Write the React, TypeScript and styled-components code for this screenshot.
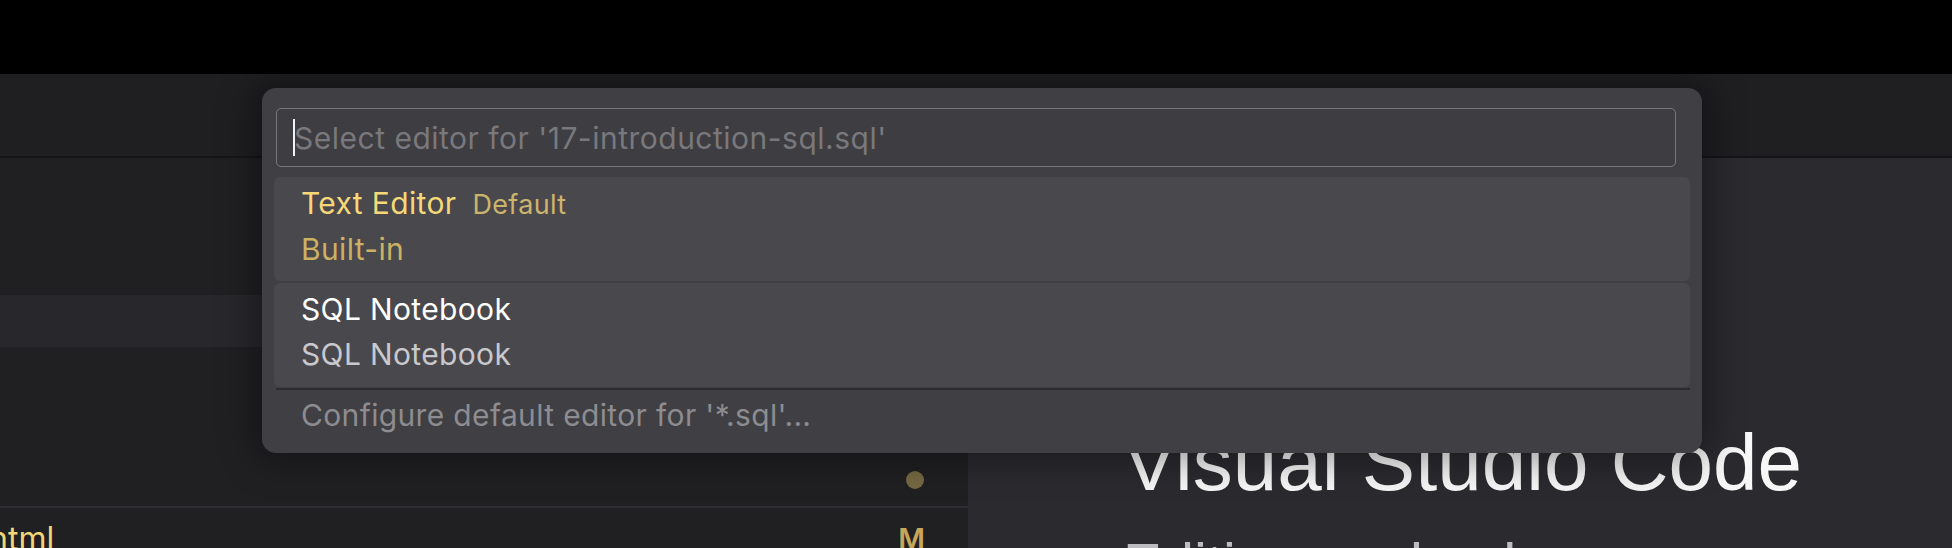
import React from 'react'
import styled, { createGlobalStyle } from 'styled-components'

const GlobalStyle = createGlobalStyle`
  html, body {
    margin: 0;
    padding: 0;
    background: #000;
  }
  body {
    width: 1952px;
    height: 548px;
    overflow: hidden;
    font-family: Inter, "Noto Sans", sans-serif;
    -webkit-font-smoothing: antialiased;
  }
`

const Window = styled.div`
  position: relative;
  width: 1952px;
  height: 548px;
  overflow: hidden;
  display: flex;
  flex-direction: column;
  background: #000;
`

const TitleBar = styled.div`
  flex: none;
  height: 74px;
  background: #000;
`

const TabStrip = styled.div`
  flex: none;
  height: 82px;
  background: #1f1e21;
  border-bottom: 2px solid #151417;
`

const Body = styled.div`
  flex: 1;
  min-height: 0;
  display: flex;
`

const Sidebar = styled.div`
  flex: none;
  width: 968px;
  padding-top: 137px;
  background: #201f22;
  display: flex;
  flex-direction: column;
`

const TreeRow = styled.div<{ $active?: boolean; $divider?: boolean }>`
  flex: none;
  height: ${({ $active }) => ($active ? 52 : 53)}px;
  padding: 0 43px 0 0;
  display: flex;
  align-items: center;
  justify-content: space-between;
  background: ${({ $active }) => ($active ? '#28272b' : 'transparent')};
  border-top: ${({ $divider }) => ($divider ? '2px solid #2e2d31' : 'none')};
  box-sizing: border-box;
`

const FileRow = styled(TreeRow)`
  align-items: flex-start;
  padding-top: 13px;
`

const Dot = styled.span`
  margin-left: auto;
  width: 18px;
  height: 18px;
  margin-right: 1px;
  border-radius: 50%;
  background: #776943;
`

const FileName = styled.span`
  margin-left: -11px;
  font-size: 32px;
  line-height: 36px;
  color: #f2d574;
`

const GitBadge = styled.span`
  font-size: 29px;
  line-height: 36px;
  font-weight: 600;
  color: #c6a658;
`

const Editor = styled.div`
  flex: 1;
  background: #2b2a2f;
  padding: 259px 0 0 155px;
  font-family: "Liberation Sans", Arial, sans-serif;
`

const WelcomeTitle = styled.h1`
  margin: 0;
  font-size: 80px;
  line-height: 92px;
  font-weight: 400;
  color: #f7f7f7;
  white-space: nowrap;
`

const WelcomeSubtitle = styled.h2`
  margin: 21px 0 0;
  font-size: 58px;
  line-height: 68px;
  font-weight: 400;
  color: #bdbcc0;
  white-space: nowrap;
`

const QuickPick = styled.div`
  position: absolute;
  left: 262px;
  top: 88px;
  width: 1440px;
  height: 365px;
  box-sizing: border-box;
  padding: 20px 12px 0 12px;
  border-radius: 14px;
  background: #403f43;
  box-shadow: 0 0 36px 8px rgba(0, 0, 0, 0.38);
  display: flex;
  flex-direction: column;
  letter-spacing: 0.35px;
`

const SearchBox = styled.div`
  flex: none;
  height: 59px;
  margin: 0 14px 0 2px;
  box-sizing: border-box;
  padding-left: 16px;
  border: 1.5px solid #78777b;
  border-radius: 5px;
  background: #3e3d41;
  display: flex;
  align-items: center;
  font-size: 30px;
  letter-spacing: 0.5px;
  color: #79787c;
  white-space: nowrap;
`

const Caret = styled.span`
  flex: none;
  width: 2px;
  height: 37px;
  margin-right: -1px;
  background: #f2f2f2;
`

const List = styled.div`
  margin-top: 10px;
  display: flex;
  flex-direction: column;
  gap: 2px;
`

const Item = styled.div`
  height: 104px;
  box-sizing: border-box;
  padding: 4px 27px 0;
  border-radius: 6px;
  background: #49484c;
`

const Line = styled.div<{ $color: string }>`
  display: flex;
  align-items: baseline;
  font-size: 30px;
  line-height: 45px;
  color: ${({ $color }) => $color};
  white-space: nowrap;
`

const Tag = styled.span`
  margin-left: 16px;
  font-size: 27px;
  color: #cdb46c;
`

const Separator = styled.div`
  flex: none;
  height: 2px;
  margin: 1px 0 0 2px;
  background: #2c2b2f;
`

const ConfigureRow = styled.div`
  margin-top: 3px;
  padding-left: 27px;
  font-size: 30px;
  line-height: 45px;
  color: #8d8c90;
  white-space: nowrap;
`

export default function App() {
  return (
    <>
      <GlobalStyle />
      <Window>
        <TitleBar />
        <TabStrip />
        <Body>
          <Sidebar>
            <TreeRow $active />
            <TreeRow />
            <TreeRow />
            <TreeRow>
              <Dot />
            </TreeRow>
            <FileRow $divider>
              <FileName>html</FileName>
              <GitBadge>M</GitBadge>
            </FileRow>
          </Sidebar>
          <Editor>
            <WelcomeTitle>Visual Studio Code</WelcomeTitle>
            <WelcomeSubtitle>Editing evolved</WelcomeSubtitle>
          </Editor>
        </Body>

        <QuickPick>
          <SearchBox>
            <Caret />
            <span>Select editor for '17-introduction-sql.sql'</span>
          </SearchBox>
          <List>
            <Item>
              <Line $color="#f6d878">
                Text Editor<Tag>Default</Tag>
              </Line>
              <Line $color="#ccb163">Built-in</Line>
            </Item>
            <Item>
              <Line $color="#ffffff">SQL Notebook</Line>
              <Line $color="#c9c8cc">SQL Notebook</Line>
            </Item>
          </List>
          <Separator />
          <ConfigureRow>Configure default editor for '*.sql'...</ConfigureRow>
        </QuickPick>
      </Window>
    </>
  )
}
